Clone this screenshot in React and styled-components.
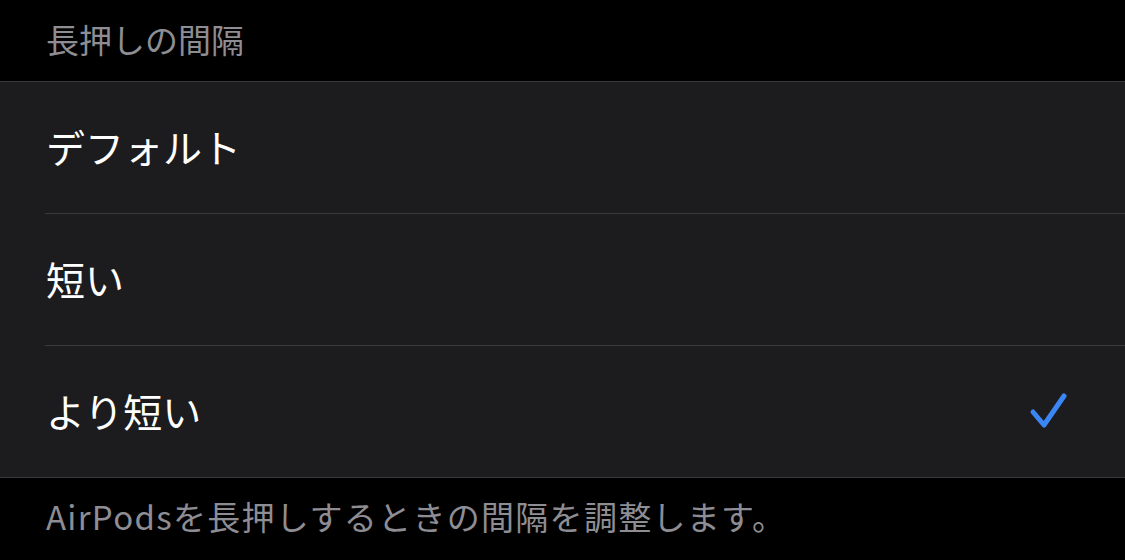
import React from "react";
import styled, { createGlobalStyle } from "styled-components";

const Global = createGlobalStyle`
  html, body { margin: 0; padding: 0; background: #000; }
  body { font-family: "Noto Sans CJK JP", "Noto Sans", sans-serif; }
`;

const Page = styled.div`
  width: 1125px;
  height: 560px;
  background: #000;
  overflow: hidden;
`;

const SectionHeader = styled.div`
  height: 82px;
  box-sizing: border-box;
  padding: 0 46px 2px;
  display: flex;
  align-items: center;
  color: #8d8d93;
  font-size: 33px;
  line-height: 1;
  border-bottom: 1px solid #3a3a3d;
`;

const Group = styled.div`
  background: #1c1c1e;
  border-bottom: 1px solid #3a3a3d;
`;

const RowWrap = styled.div`
  margin-left: 45px;
  border-bottom: ${(p) => (p.$last ? "none" : "1px solid #3a3a3d")};
`;

const RowInner = styled.div`
  height: 131px;
  display: flex;
  align-items: center;
  justify-content: space-between;
  padding: 0 56px 3px 1px;
  box-sizing: border-box;
  color: #fff;
  font-size: 39px;
  line-height: 1;
`;

const CheckIcon = styled.svg`
  margin-top: 8px;
  flex: none;
`;

const Footer = styled.div`
  padding: 18px 46px 0;
  color: #8d8d93;
  font-size: 33px;
  letter-spacing: 1.3px;
  line-height: 40px;
`;

const Check = () => (
  <CheckIcon width="44" height="44" viewBox="0 0 44 44">
    <path
      d="M8 20 L19 33 L39 4"
      fill="none"
      stroke="#3a86f4"
      strokeWidth="5"
      strokeLinecap="round"
      strokeLinejoin="round"
    />
  </CheckIcon>
);

const items = [
  { label: "デフォルト", selected: false },
  { label: "短い", selected: false },
  { label: "より短い", selected: true },
];

export default function App() {
  return (
    <Page>
      <Global />
      <SectionHeader>長押しの間隔</SectionHeader>
      <Group>
        {items.map((it, i) => (
          <RowWrap key={it.label} $last={i === items.length - 1}>
            <RowInner>
              <span>{it.label}</span>
              {it.selected && <Check />}
            </RowInner>
          </RowWrap>
        ))}
      </Group>
      <Footer>AirPodsを長押しするときの間隔を調整します。</Footer>
    </Page>
  );
}
